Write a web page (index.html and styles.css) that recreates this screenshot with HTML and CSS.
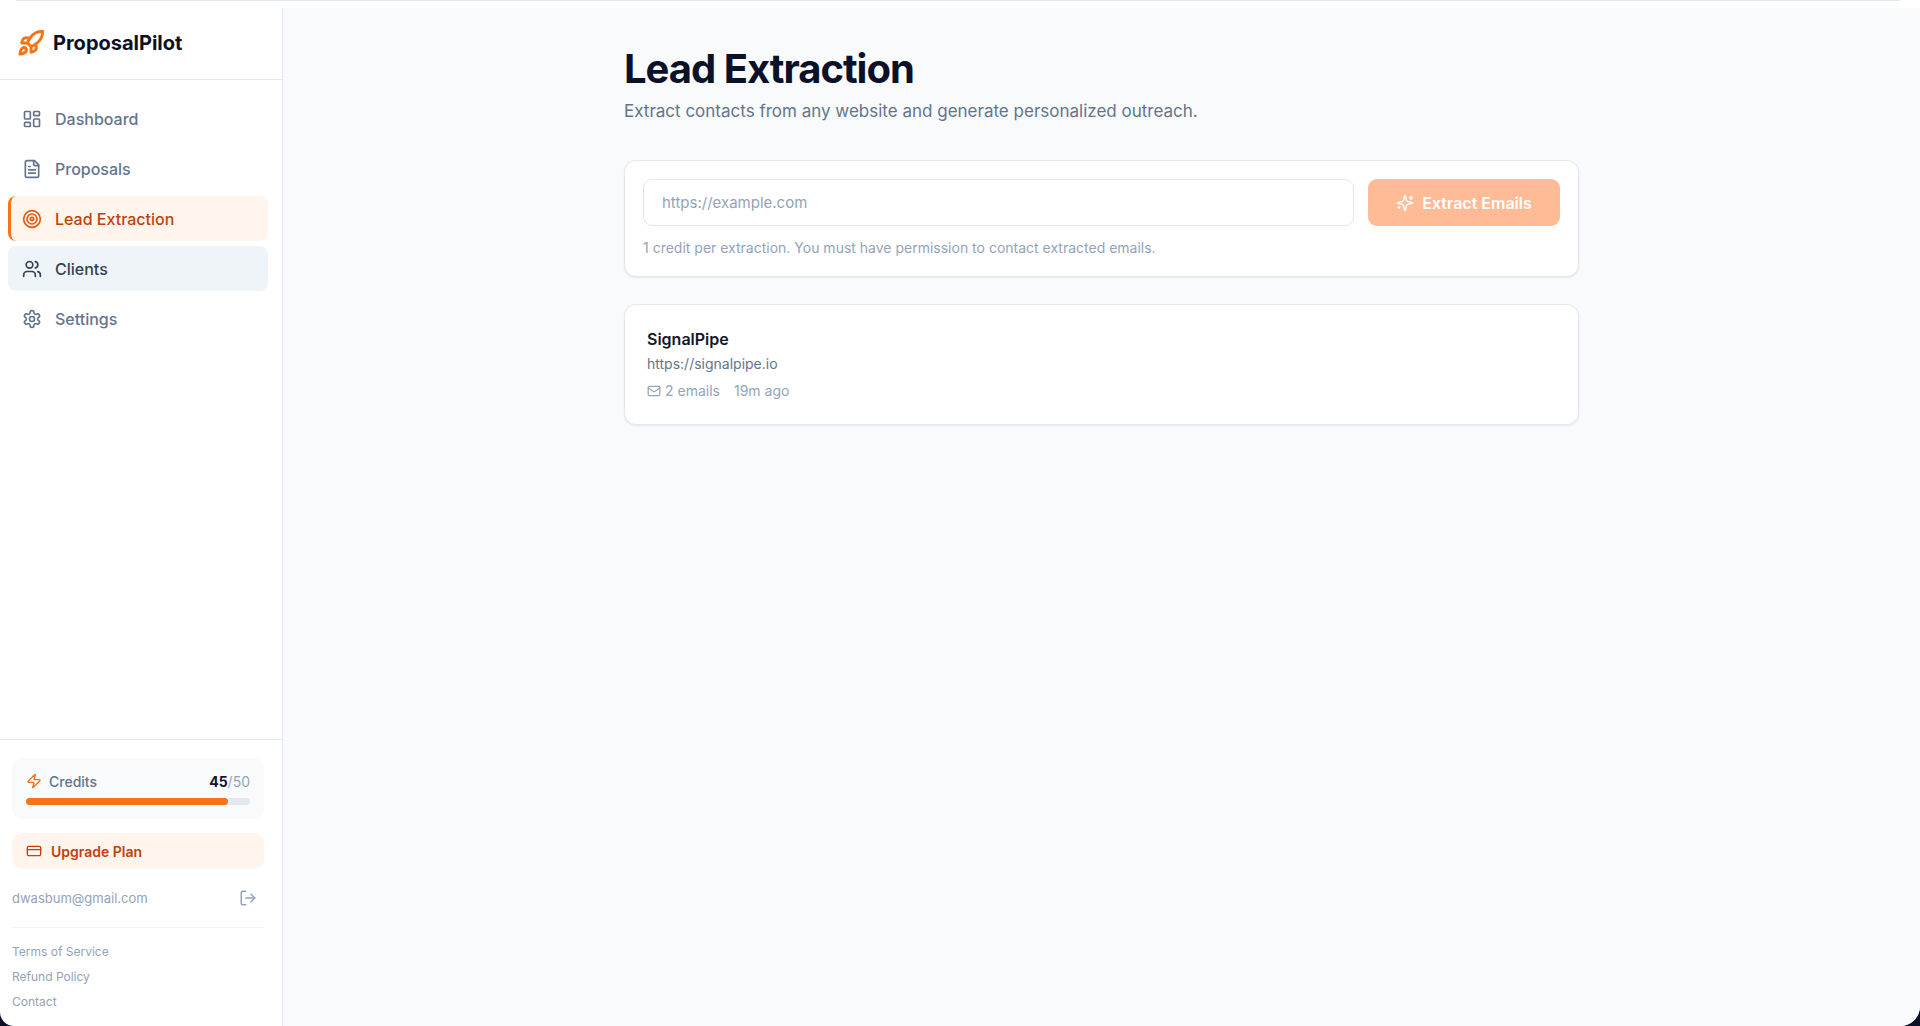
FILE: index.html
```html
<!DOCTYPE html>
<html lang="en">
<head>
<meta charset="utf-8">
<title>ProposalPilot</title>
<link rel="stylesheet" href="styles.css">
</head>
<body>
<div class="window">
  <div class="topline"></div>
  <div class="app">
    <aside class="sidebar">
      <a class="brand" href="#">
        <svg class="icon brand-icon" viewBox="0 0 24 24"><path d="M4.5 16.5c-1.5 1.26-2 5-2 5s3.74-.5 5-2c.71-.84.7-2.13-.09-2.91a2.18 2.18 0 0 0-2.91-.09z"/><path d="m12 15-3-3a22 22 0 0 1 2-3.95A12.88 12.88 0 0 1 22 2c0 2.72-.78 7.5-6 11a22.35 22.35 0 0 1-4 2z"/><path d="M9 12H4s.55-3.03 2-4c1.62-1.08 5 0 5 0"/><path d="M12 15v5s3.03-.55 4-2c1.08-1.62 0-5 0-5"/></svg>
        <span>ProposalPilot</span>
      </a>
      <nav class="nav">
        <a class="nav-item" href="#">
          <svg class="icon" viewBox="0 0 24 24"><rect x="3" y="3" width="7" height="9" rx="1"/><rect x="14" y="3" width="7" height="5" rx="1"/><rect x="14" y="12" width="7" height="9" rx="1"/><rect x="3" y="16" width="7" height="5" rx="1"/></svg>
          Dashboard
        </a>
        <a class="nav-item" href="#">
          <svg class="icon" viewBox="0 0 24 24"><path d="M15 2H6a2 2 0 0 0-2 2v16a2 2 0 0 0 2 2h12a2 2 0 0 0 2-2V7Z"/><path d="M14 2v4a2 2 0 0 0 2 2h4"/><path d="M10 9H8M16 13H8M16 17H8"/></svg>
          Proposals
        </a>
        <a class="nav-item active" href="#">
          <svg class="icon" viewBox="0 0 24 24"><circle cx="12" cy="12" r="10"/><circle cx="12" cy="12" r="6"/><circle cx="12" cy="12" r="2"/></svg>
          Lead Extraction
        </a>
        <a class="nav-item hovered" href="#">
          <svg class="icon" viewBox="0 0 24 24"><path d="M16 21v-2a4 4 0 0 0-4-4H6a4 4 0 0 0-4 4v2"/><circle cx="9" cy="7" r="4"/><path d="M22 21v-2a4 4 0 0 0-3-3.87"/><path d="M16 3.13a4 4 0 0 1 0 7.75"/></svg>
          Clients
        </a>
        <a class="nav-item" href="#">
          <svg class="icon" viewBox="0 0 24 24"><path d="M12.22 2h-.44a2 2 0 0 0-2 2v.18a2 2 0 0 1-1 1.73l-.43.25a2 2 0 0 1-2 0l-.15-.08a2 2 0 0 0-2.73.73l-.22.38a2 2 0 0 0 .73 2.73l.15.1a2 2 0 0 1 1 1.72v.51a2 2 0 0 1-1 1.74l-.15.09a2 2 0 0 0-.73 2.73l.22.38a2 2 0 0 0 2.73.73l.15-.08a2 2 0 0 1 2 0l.43.25a2 2 0 0 1 1 1.73V20a2 2 0 0 0 2 2h.44a2 2 0 0 0 2-2v-.18a2 2 0 0 1 1-1.73l.43-.25a2 2 0 0 1 2 0l.15.08a2 2 0 0 0 2.73-.73l.22-.39a2 2 0 0 0-.73-2.73l-.15-.08a2 2 0 0 1-1-1.74v-.5a2 2 0 0 1 1-1.74l.15-.09a2 2 0 0 0 .73-2.73l-.22-.38a2 2 0 0 0-2.73-.73l-.15.08a2 2 0 0 1-2 0l-.43-.25a2 2 0 0 1-1-1.73V4a2 2 0 0 0-2-2z"/><circle cx="12" cy="12" r="3"/></svg>
          Settings
        </a>
      </nav>
      <div class="account">
        <div class="credits">
          <div class="credits-row">
            <svg class="icon small bolt" viewBox="0 0 24 24"><path d="M4 14a1 1 0 0 1-.78-1.63l9.9-10.2a.5.5 0 0 1 .86.46l-1.92 6.02A1 1 0 0 0 13 10h7a1 1 0 0 1 .78 1.63l-9.9 10.2a.5.5 0 0 1-.86-.46l1.92-6.02A1 1 0 0 0 11 14z"/></svg>
            <span class="credits-label">Credits</span>
            <span class="credits-total"><strong>45</strong>/50</span>
          </div>
          <div class="meter"><div class="meter-fill" style="width: 90%"></div></div>
        </div>
        <a class="upgrade" href="#">
          <svg class="icon small" viewBox="0 0 24 24"><rect x="2" y="5" width="20" height="14" rx="2"/><path d="M2 10h20"/></svg>
          Upgrade Plan
        </a>
        <div class="user">
          <span>dwasbum@gmail.com</span>
          <button class="logout" type="button" aria-label="Log out">
            <svg class="icon" viewBox="0 0 24 24"><path d="M9 21H5a2 2 0 0 1-2-2V5a2 2 0 0 1 2-2h4"/><path d="m16 17 5-5-5-5"/><path d="M21 12H9"/></svg>
          </button>
        </div>
        <div class="legal">
          <a href="#">Terms of Service</a>
          <a href="#">Refund Policy</a>
          <a href="#">Contact</a>
        </div>
      </div>
    </aside>
    <main class="main">
      <div class="content">
        <h1>Lead Extraction</h1>
        <p class="subtitle">Extract contacts from any website and generate personalized outreach.</p>
        <form class="card extract">
          <div class="extract-row">
            <input class="url" type="url" placeholder="https://example.com" aria-label="Website URL">
            <button class="submit" type="submit" disabled>
              <svg class="icon" viewBox="0 0 24 24"><path d="M9.937 15.5A2 2 0 0 0 8.5 14.063l-6.135-1.582a.5.5 0 0 1 0-.962L8.5 9.936A2 2 0 0 0 9.937 8.5l1.582-6.135a.5.5 0 0 1 .963 0L14.063 8.5A2 2 0 0 0 15.5 9.937l6.135 1.581a.5.5 0 0 1 0 .964L15.5 14.063a2 2 0 0 0-1.437 1.437l-1.582 6.135a.5.5 0 0 1-.963 0z"/><path d="M20 3v4M22 5h-4M4 17v2M5 18H3"/></svg>
              Extract Emails
            </button>
          </div>
          <p class="note">1 credit per extraction. You must have permission to contact extracted emails.</p>
        </form>
        <article class="card lead">
          <h2>SignalPipe</h2>
          <p class="lead-url">https://signalpipe.io</p>
          <div class="meta">
            <span class="emails"><svg class="icon" viewBox="0 0 24 24"><rect x="2" y="4" width="20" height="16" rx="2"/><path d="m22 7-8.97 5.7a1.94 1.94 0 0 1-2.06 0L2 7"/></svg>2 emails</span>
            <span>19m ago</span>
          </div>
        </article>
      </div>
    </main>
  </div>
</div>
</body>
</html>
```

FILE: styles.css
```css
* { box-sizing: border-box; }

body {
  margin: 0;
  background: #0a1128;
  font-family: Inter, "Liberation Sans", sans-serif;
  font-size: 16px;
  color: #0f172a;
}

h1, h2, p { margin: 0; }
a { color: inherit; text-decoration: none; }
button, input { font: inherit; }

.icon {
  width: 20px;
  height: 20px;
  flex: none;
  fill: none;
  stroke: currentColor;
  stroke-width: 2;
  stroke-linecap: round;
  stroke-linejoin: round;
}
.icon.small { width: 16px; height: 16px; }

.window {
  min-height: 100vh;
  display: flex;
  flex-direction: column;
  background: #fff;
  border-radius: 0 0 20px 14px;
  overflow: hidden;
}
.topline {
  height: 8px;
  margin: 0 20px 0 16px;
  border-top: 1px solid #e2e8f0;
}
.app { flex: 1; display: flex; }

.sidebar {
  width: 283px;
  flex: none;
  display: flex;
  flex-direction: column;
  border-right: 1px solid #e2e8f0;
}
.brand {
  display: flex;
  align-items: center;
  gap: 8px;
  height: 72px;
  padding: 0 17px 2px;
  border-bottom: 1px solid #e2e8f0;
  color: #0a1128;
  font-size: 20px;
  font-weight: 700;
}
.brand-icon {
  width: 28px;
  height: 28px;
  color: #f97316;
  stroke-width: 2.5;
}

.nav {
  flex: 1;
  display: flex;
  flex-direction: column;
  gap: 5px;
  padding: 16px 14px 16px 8px;
}
.nav-item {
  display: flex;
  align-items: center;
  gap: 13px;
  height: 45px;
  padding-left: 14px;
  border-radius: 8px;
  color: #64748b;
  font-weight: 500;
}
.nav-item.active {
  padding-left: 11px;
  border-left: 3px solid #f97316;
  background: #fff5ed;
  color: #c2410c;
}
.nav-item.active .icon { color: #ea580c; }
.nav-item.hovered { background: #eff4f8; color: #334155; }

.account {
  padding: 18px 18px 12px 12px;
  border-top: 1px solid #e2e8f0;
}
.credits {
  padding: 14px;
  border-radius: 10px;
  background: #f8fafc;
}
.credits-row {
  display: flex;
  align-items: center;
  gap: 7px;
  height: 18px;
  margin-bottom: 8px;
  font-size: 14px;
}
.bolt { color: #f97316; }
.credits-label { flex: 1; color: #64748b; font-weight: 500; }
.credits-total { color: #94a3b8; }
.credits-total strong { color: #0f172a; }
.meter {
  height: 7px;
  border-radius: 4px;
  background: #e2e8f0;
}
.meter-fill {
  height: 100%;
  border-radius: 4px;
  background: #f97316;
}
.upgrade {
  display: flex;
  align-items: center;
  gap: 9px;
  height: 36px;
  margin-top: 14px;
  padding: 0 14px;
  border-radius: 10px;
  background: #fff5ed;
  color: #c2410c;
  font-size: 14px;
  font-weight: 600;
}
.user {
  display: flex;
  align-items: center;
  justify-content: space-between;
  height: 59px;
  padding-right: 7px;
  border-bottom: 1px solid #f1f5f9;
  color: #94a3b8;
  font-size: 13px;
}
.logout {
  display: flex;
  padding: 0;
  border: 0;
  background: none;
  color: #94a3b8;
}
.logout .icon { width: 18px; height: 18px; }
.legal {
  display: flex;
  flex-direction: column;
  padding-top: 11px;
  color: #94a3b8;
  font-size: 12px;
  line-height: 25px;
}

.main {
  flex: 1;
  padding: 36px 24px;
  background: #f8fafc;
}
.content { max-width: 955px; margin: 0 auto; }
h1 {
  color: #0a1128;
  font-size: 40px;
  font-weight: 700;
  line-height: 50px;
  letter-spacing: -1px;
}
.subtitle {
  margin-top: 4px;
  color: #64748b;
  font-size: 17px;
  line-height: 26px;
}
.card {
  border: 1px solid #e2e8f0;
  border-radius: 12px;
  background: #fff;
  box-shadow: 0 1px 2px #e2e8f0;
}
.extract { margin-top: 36px; padding: 18px; }
.extract-row { display: flex; gap: 14px; }
.url {
  flex: 1;
  min-width: 0;
  height: 47px;
  padding: 0 18px;
  border: 1px solid #e2e8f0;
  border-radius: 9px;
  background: #fff;
  font-size: 15px;
}
.url::placeholder { color: #94a3b8; }
.submit {
  display: flex;
  align-items: center;
  justify-content: center;
  gap: 8px;
  width: 192px;
  border: 0;
  border-radius: 9px;
  background: #ffba96;
  color: #fff;
  font-weight: 600;
}
.submit .icon { width: 18px; height: 18px; }
.note {
  margin-top: 12px;
  color: #94a3b8;
  font-size: 14px;
  line-height: 20px;
}
.lead { margin-top: 27px; padding: 22px; }
h2 { font-size: 16px; font-weight: 600; line-height: 24px; }
.lead-url {
  margin-top: 2px;
  color: #64748b;
  font-size: 14px;
  line-height: 22px;
}
.meta {
  display: flex;
  gap: 14px;
  margin-top: 5px;
  color: #94a3b8;
  font-size: 14px;
  line-height: 22px;
}
.emails { display: flex; align-items: center; gap: 4px; }
.emails .icon { width: 14px; height: 14px; }
```
